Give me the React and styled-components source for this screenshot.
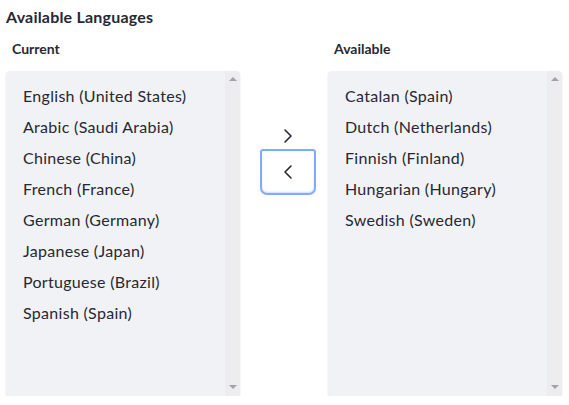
import React from 'react'
import styled, { createGlobalStyle } from 'styled-components'

const current = [
  'English (United States)',
  'Arabic (Saudi Arabia)',
  'Chinese (China)',
  'French (France)',
  'German (Germany)',
  'Japanese (Japan)',
  'Portuguese (Brazil)',
  'Spanish (Spain)',
]

const available = [
  'Catalan (Spain)',
  'Dutch (Netherlands)',
  'Finnish (Finland)',
  'Hungarian (Hungary)',
  'Swedish (Sweden)',
]

const Chevron = ({ dir }) => (
  <svg width="12" height="16" viewBox="0 0 12 16" fill="none">
    <path
      d={dir === 'right' ? 'M3 2 L9 8 L3 14' : 'M9 2 L3 8 L9 14'}
      stroke="#272833"
      strokeWidth="1.6"
      strokeLinecap="round"
      strokeLinejoin="round"
    />
  </svg>
)

const ListBox = ({ items }) => (
  <Box>
    <Items>
      {items.map(i => <Item key={i}>{i}</Item>)}
    </Items>
    <Scroll>
      <Arrow />
      <Arrow down />
    </Scroll>
  </Box>
)

const App = () => {
  return (
    <>
      <Global />
      <Wrap>
        <Title>Available Languages</Title>
        <Row>
          <Column>
            <Label>Current</Label>
            <ListBox items={current} />
          </Column>
          <Buttons>
            <MoveBtn><Chevron dir="right" /></MoveBtn>
            <MoveBtn focused><Chevron dir="left" /></MoveBtn>
          </Buttons>
          <Column>
            <Label>Available</Label>
            <ListBox items={available} />
          </Column>
        </Row>
      </Wrap>
    </>
  )
}

export default App

const Global = createGlobalStyle`
body{
  margin:0;
  background:#fff;
  font-family: Lato, "Open Sans", sans-serif;
  color:#272833;
}
`
const Wrap = styled.div`
padding:6px 7px 0 6px;
width:569px;
box-sizing:border-box;
`
const Title = styled.h3`
margin:0;
font-size:16px;
font-weight:700;
line-height:22px;
letter-spacing:0.2px;
color:#272833;
`
const Row = styled.div`
display:flex;
align-items:flex-start;
margin-top:11px;
`
const Column = styled.div`
width:234px;
flex:none;
display:flex;
flex-direction:column;
`
const Label = styled.div`
font-size:14px;
font-weight:700;
padding-left:6px;
line-height:20px;
margin-bottom:12px;
`
const Box = styled.div`
display:flex;
height:325px;
background:#f1f2f5;
border-radius:4px;
box-shadow:0 1px 2px rgba(0,0,0,0.12);
overflow:hidden;
`
const Items = styled.div`
flex:1;
padding:9px 0 0 17px;
`
const Item = styled.div`
font-size:16px;
line-height:31px;
letter-spacing:0.3px;
`
const Scroll = styled.div`
width:15px;
background:#ededf0;
display:flex;
flex-direction:column;
justify-content:space-between;
align-items:center;
padding:6px 0 7px;
`
const Arrow = styled.div`
width:0;
height:0;
border-left:4px solid transparent;
border-right:4px solid transparent;
${p => p.down ? 'border-top:4px solid #a2a2a8;' : 'border-bottom:4px solid #a2a2a8;'}
`
const Buttons = styled.div`
flex:1;
display:flex;
flex-direction:column;
align-items:center;
padding:72px 0 0 8px;
`
const MoveBtn = styled.button`
width:56px;
height:${p => p.focused ? '46px' : '38px'};
display:flex;
align-items:center;
justify-content:center;
background:transparent;
border:${p => p.focused ? '2px solid #80acff' : '2px solid transparent'};
border-radius:${p => p.focused ? '3px 3px 7px 7px' : '4px'};
box-shadow:${p => p.focused ? 'inset 0 -1px 2px rgba(128,172,255,0.4)' : 'none'};
padding:0;
${p => !p.focused && 'padding-top:12px;'}
`
